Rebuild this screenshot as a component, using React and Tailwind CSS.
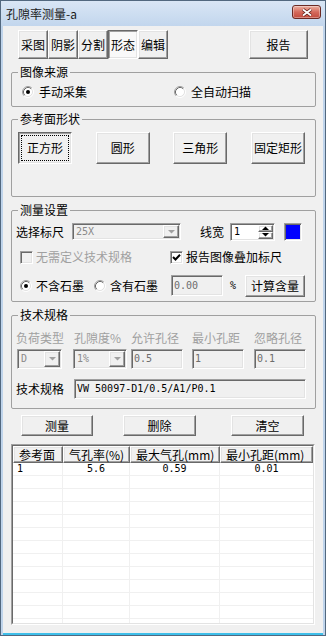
import React from "react";

const FONT = "font-['Noto_Sans_CJK_SC','Noto_Sans_CJK_JP',sans-serif]";
const MONO = "font-['DejaVu_Sans_Mono','Liberation_Mono',monospace] text-[10px]";
const RAISED =
  "border border-t-white border-l-white border-r-[#696969] border-b-[#696969] shadow-[inset_-1px_-1px_0_#a0a0a0,inset_1px_1px_0_#e3e3e3]";
const PRESSED =
  "border border-t-[#696969] border-l-[#696969] border-r-white border-b-white shadow-[inset_1px_1px_0_#a0a0a0,inset_-1px_-1px_0_#e3e3e3]";
const SUNKEN =
  "border border-t-[#a0a0a0] border-l-[#a0a0a0] border-r-white border-b-white shadow-[inset_1px_1px_0_#696969,inset_-1px_-1px_0_#e3e3e3] p-[1px]";
const FIELD = "ml-[8px] mr-[7px] border border-[#a0a0a0] rounded-[2px]";
const LEGEND = "ml-[6px] px-[2px] leading-[14px]";

function Radio({ checked }) {
  return (
    <svg width="12" height="12" viewBox="0 0 12 12" className="shrink-0">
      <circle cx="6" cy="6" r="4.5" fill="#fff" />
      <path d="M2.11 9.89 A5.5 5.5 0 0 1 9.89 2.11" fill="none" stroke="#a0a0a0" />
      <path d="M9.89 2.11 A5.5 5.5 0 0 1 2.11 9.89" fill="none" stroke="#ffffff" />
      <path d="M2.82 9.18 A4.5 4.5 0 0 1 9.18 2.82" fill="none" stroke="#696969" />
      <path d="M9.18 2.82 A4.5 4.5 0 0 1 2.82 9.18" fill="none" stroke="#e3e3e3" />
      {checked && <circle cx="6" cy="6" r="2" fill="#000" />}
    </svg>
  );
}

function Check({ checked, disabled }) {
  return (
    <div
      className={`w-[13px] h-[13px] shrink-0 flex items-center justify-center ${SUNKEN} ${
        disabled ? "bg-[#f0f0f0]" : "bg-white"
      }`}
    >
      {checked && (
        <svg width="9" height="9" viewBox="0 0 9 9">
          <path d="M1 4 L3.5 6.5 L8 1.8" stroke="#000" strokeWidth="2" fill="none" />
        </svg>
      )}
    </div>
  );
}

function Arrow({ color = "#000", up = false }) {
  return (
    <svg width="7" height="4" viewBox="0 0 7 4">
      {up ? <path d="M0 4 L3.5 0.5 L7 4 Z" fill={color} /> : <path d="M0 0 L7 0 L3.5 3.5 Z" fill={color} />}
    </svg>
  );
}

function Combo({ text, className }) {
  return (
    <div className={`flex bg-[#f0f0f0] ${SUNKEN} ${className}`}>
      <div className={`flex-1 flex items-center pl-[2px] text-[#8a8a8a] ${MONO}`}>{text}</div>
      <div className={`w-[16px] flex items-center justify-center ${RAISED}`}>
        <Arrow color="#a0a0a0" />
      </div>
    </div>
  );
}

function Edit({ text, className, color = "text-[#6d6d6d]" }) {
  return (
    <div className={`flex items-center pl-[2px] bg-[#f0f0f0] ${SUNKEN} ${className}`}>
      <span className={`${MONO} ${color}`}>{text}</span>
    </div>
  );
}

function Close() {
  return (
    <div className="mt-[4px] w-[29px] h-[14px] rounded-[3px] border border-[#6b2a24] bg-linear-to-b from-[#eab0a2] via-[#d56a5c] to-[#c24a3d] shadow-[inset_0_0_0_1px_rgba(255,255,255,0.35)] flex items-center justify-center">
      <svg width="12" height="9" viewBox="0 0 12 9">
        <path d="M2 1.5 L10 7.5 M10 1.5 L2 7.5" stroke="#5a1a14" strokeWidth="3.4" />
        <path d="M2 1.5 L10 7.5 M10 1.5 L2 7.5" stroke="#ffffff" strokeWidth="1.8" />
      </svg>
    </div>
  );
}

const HEAD = [
  ["参考面", "w-[50px]"],
  ["气孔率(%)", "w-[67px]"],
  ["最大气孔(mm)", "w-[90px]"],
  ["最小孔距(mm)", "w-[93px]"],
];

export default function App() {
  const rows = Array.from({ length: 13 });
  return (
    <div
      className={`w-[326px] h-[636px] overflow-hidden border border-[#52687f] bg-[#bfd4eb] flex flex-col text-[12px] leading-[14px] text-black ${FONT}`}
    >
      <div className="h-[25px] shrink-0 flex items-start justify-between pl-[5px] pr-[4px] bg-linear-to-b from-[#d9e6f5] to-[#c2d6ed]">
        <span className="mt-[6px] text-[#1a1a1a]">孔隙率测量-a</span>
        <Close />
      </div>

      <div className="flex-1 mx-[2px] bg-[#f0f0f0] border-b-[2px] border-b-[#3fbfea] flex flex-col">
        {/* tabs */}
        <div className="flex mt-[4px] h-[29px] pl-[15px] pr-[15px]">
          {["采图", "阴影", "分割", "形态", "编辑"].map((t) =>
            t === "形态" ? (
              <div key={t} className={`w-[30px] h-full flex items-center justify-center bg-[#f9f9f9] ${PRESSED}`}>
                {t}
              </div>
            ) : (
              <div key={t} className={`w-[30px] h-full flex items-center justify-center ${RAISED}`}>
                {t}
              </div>
            )
          )}
          <div className={`ml-auto w-[59px] h-full flex items-center justify-center ${RAISED}`}>报告</div>
        </div>

        {/* 图像来源 */}
        <fieldset className={`mt-[6px] pb-[7px] ${FIELD}`}>
          <legend className={LEGEND}>图像来源</legend>
          <div className="mt-[6px] h-[14px] flex items-center pl-[10px]">
            <div className="w-[152px] flex items-center gap-[5px]">
              <Radio checked />
              <span>手动采集</span>
            </div>
            <div className="flex items-center gap-[5px]">
              <Radio />
              <span>全自动扫描</span>
            </div>
          </div>
        </fieldset>

        {/* 参考面形状 */}
        <fieldset className={`mt-[5px] pb-[32px] ${FIELD}`}>
          <legend className={LEGEND}>参考面形状</legend>
          <div className="mt-[6px] h-[32px] flex justify-between pl-[6px] pr-[10px]">
            <div className={`w-[54px] h-full p-[2px] flex ${PRESSED}`}>
              <div className="flex-1 border border-dotted border-black flex items-center justify-center">正方形</div>
            </div>
            <div className={`w-[54px] h-full flex items-center justify-center ${RAISED}`}>圆形</div>
            <div className={`w-[54px] h-full flex items-center justify-center ${RAISED}`}>三角形</div>
            <div className={`w-[54px] h-full flex items-center justify-center ${RAISED}`}>固定矩形</div>
          </div>
        </fieldset>

        {/* 测量设置 */}
        <fieldset className={`mt-[6px] pb-[4px] ${FIELD}`}>
          <legend className={LEGEND}>测量设置</legend>
          <div className="mt-[4px] h-[21px] flex items-center pl-[4px]">
            <span>选择标尺</span>
            <Combo text="25X" className="ml-[8px] w-[109px] h-[17px]" />
            <span className="ml-[19px]">线宽</span>
            <div className={`ml-[6px] w-[45px] h-[18px] bg-white flex ${SUNKEN}`}>
              <div className={`flex-1 flex items-center pl-[2px] ${MONO}`}>1</div>
              <div className="w-[15px] flex flex-col">
                <div className={`flex-1 flex items-center justify-center ${RAISED}`}>
                  <Arrow up />
                </div>
                <div className={`flex-1 flex items-center justify-center ${RAISED}`}>
                  <Arrow />
                </div>
              </div>
            </div>
            <div className={`ml-[9px] w-[18px] h-[18px] ${SUNKEN}`}>
              <div className="w-full h-full bg-[#0000ff]" />
            </div>
          </div>

          <div className="mt-[8px] h-[14px] flex items-center pl-[8px]">
            <div className="w-[150px] flex items-center gap-[3px]">
              <Check disabled />
              <span className="text-[#a0a0a0]">无需定义技术规格</span>
            </div>
            <div className="flex items-center gap-[3px]">
              <Check checked />
              <span>报告图像叠加标尺</span>
            </div>
          </div>

          <div className="mt-[10px] h-[23px] flex items-center pl-[8px]">
            <div className="w-[74px] flex items-center gap-[4px]">
              <Radio checked />
              <span>不含石墨</span>
            </div>
            <div className="flex items-center gap-[4px]">
              <Radio />
              <span>含有石墨</span>
            </div>
            <Edit text="0.00" className="ml-[13px] w-[52px] h-[21px]" />
            <span className={`ml-[7px] ${MONO}`}>%</span>
            <div className={`ml-[9px] w-[60px] h-[22px] flex items-center justify-center ${RAISED}`}>计算含量</div>
          </div>
        </fieldset>

        {/* 技术规格 */}
        <fieldset className={`mt-[6px] pb-[9px] ${FIELD}`}>
          <legend className={LEGEND}>技术规格</legend>
          <div className="mt-[9px] h-[14px] flex items-center pl-[4px] text-[#a0a0a0]">
            <span className="w-[58px]">负荷类型</span>
            <span className="w-[57px]">孔隙度%</span>
            <span className="w-[61px]">允许孔径</span>
            <span className="w-[62px]">最小孔距</span>
            <span>忽略孔径</span>
          </div>
          <div className="mt-[4px] h-[20px] flex pl-[5px]">
            <Combo text="D" className="w-[45px] h-full" />
            <Combo text="1%" className="ml-[11px] w-[54px] h-full" />
            <Edit text="0.5" className="ml-[4px] w-[52px] h-full" />
            <Edit text="1" className="ml-[9px] w-[52px] h-full" />
            <Edit text="0.1" className="ml-[10px] w-[52px] h-full" />
          </div>
          <div className="mt-[10px] h-[20px] flex items-center pl-[4px]">
            <span>技术规格</span>
            <Edit text="VW 50097-D1/0.5/A1/P0.1" color="text-black" className="ml-[10px] w-[232px] h-full" />
          </div>
        </fieldset>

        {/* buttons */}
        <div className="mt-[6px] h-[21px] flex pl-[18px]">
          <div className={`w-[72px] flex items-center justify-center ${RAISED}`}>测量</div>
          <div className={`ml-[30px] w-[73px] flex items-center justify-center ${RAISED}`}>删除</div>
          <div className={`ml-[35px] w-[73px] flex items-center justify-center ${RAISED}`}>清空</div>
        </div>

        {/* table */}
        <div className="mt-[8px] ml-[8px] w-[304px] h-[181px] border border-t-[#a0a0a0] border-l-[#a0a0a0] border-r-white border-b-white">
          <div className="w-full h-full border border-t-[#696969] border-l-[#696969] border-r-[#e3e3e3] border-b-[#e3e3e3] bg-white overflow-hidden flex flex-col">
            <div className="h-[17px] shrink-0 flex">
              {HEAD.map(([t, w]) => (
                <div key={t} className={`${w} h-full flex items-center pl-[5px] bg-[#f0f0f0] ${RAISED}`}>
                  {t}
                </div>
              ))}
            </div>
            {rows.map((_, i) => (
              <div key={i} className={`h-[13px] shrink-0 flex leading-[12px] ${MONO}`}>
                <div className="w-[50px] h-full border-r border-b border-[#f0f0f0] pl-[4px] flex items-center">
                  {i === 0 ? "1" : ""}
                </div>
                <div className="w-[67px] h-full border-r border-b border-[#f0f0f0] flex items-center justify-center">
                  {i === 0 ? "5.6" : ""}
                </div>
                <div className="w-[90px] h-full border-r border-b border-[#f0f0f0] flex items-center justify-center">
                  {i === 0 ? "0.59" : ""}
                </div>
                <div className="w-[93px] h-full border-b border-[#f0f0f0] flex items-center justify-center">
                  {i === 0 ? "0.01" : ""}
                </div>
              </div>
            ))}
          </div>
        </div>
      </div>
    </div>
  );
}
